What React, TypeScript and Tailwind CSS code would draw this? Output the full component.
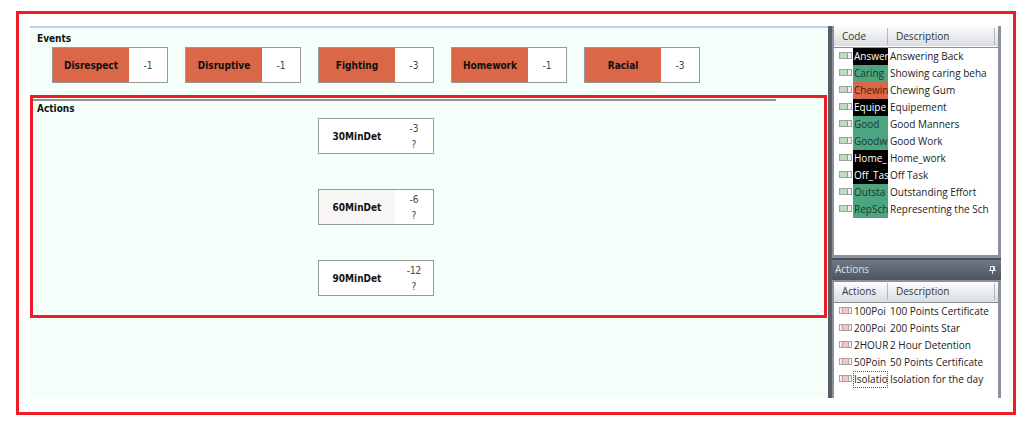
import { clsx } from 'clsx'

type Tone = 'black' | 'green' | 'orange'

const events = [
  { name: 'Disrespect', points: '-1' },
  { name: 'Disruptive', points: '-1' },
  { name: 'Fighting', points: '-3' },
  { name: 'Homework', points: '-1' },
  { name: 'Racial', points: '-3' },
]

const actions = [
  { name: '30MinDet', points: '-3', shaded: false },
  { name: '60MinDet', points: '-6', shaded: true },
  { name: '90MinDet', points: '-12', shaded: false },
]

const codes: { code: string; description: string; tone: Tone }[] = [
  { code: 'Answer', description: 'Answering Back', tone: 'black' },
  { code: 'Caring', description: 'Showing caring beha', tone: 'green' },
  { code: 'Chewin', description: 'Chewing Gum', tone: 'orange' },
  { code: 'Equipe', description: 'Equipement', tone: 'black' },
  { code: 'Good', description: 'Good Manners', tone: 'green' },
  { code: 'Goodw', description: 'Good Work', tone: 'green' },
  { code: 'Home_', description: 'Home_work', tone: 'black' },
  { code: 'Off_Tas', description: 'Off Task', tone: 'black' },
  { code: 'Outsta', description: 'Outstanding Effort', tone: 'green' },
  { code: 'RepSch', description: 'Representing the Sch', tone: 'green' },
]

const actionCodes = [
  { code: '100Poi', description: '100 Points Certificate' },
  { code: '200Poi', description: '200 Points Star' },
  { code: '2HOUR', description: '2 Hour Detention' },
  { code: '50Poin', description: '50 Points Certificate' },
  { code: 'Isolatio', description: 'Isolation for the day', focused: true },
]

const tones: Record<Tone, string> = {
  black: 'bg-black text-white',
  green: 'bg-[#4ca580] text-[#173a2c]',
  orange: 'bg-[#da6747] text-[#4a1c10]',
}

function EventIcon() {
  return (
    <svg width="13" height="7" viewBox="0 0 13 7" className="block" aria-hidden="true">
      <rect x="0.5" y="0.5" width="12" height="6" fill="#f0f0f0" stroke="#9aa39c" />
      <rect x="1" y="1" width="7" height="5" fill="#bfdcbf" />
      <path d="M8.5 1v5" stroke="#8f9891" />
    </svg>
  )
}

function ActionIcon() {
  return (
    <svg width="13" height="7" viewBox="0 0 13 7" className="block" aria-hidden="true">
      <rect x="0.5" y="0.5" width="12" height="6" fill="#f1f1f1" stroke="#a6a2a2" />
      <rect x="4" y="1" width="5" height="5" fill="#fbc4c4" />
      <path d="M3.5 1v5M9.5 1v5" stroke="#b8a6a6" />
    </svg>
  )
}

function PinIcon() {
  return (
    <svg width="7" height="8" viewBox="0 0 7 8" aria-hidden="true">
      <path d="M1.5 4.5v-4h4v4M0 4.5h7M3.5 5v3" fill="none" stroke="#e6e9ed" />
      <path d="M4.5 1v3" stroke="#e6e9ed" />
    </svg>
  )
}

function ListHead({ first }: { first: string }) {
  return (
    <thead>
      <tr className="h-[21px] bg-linear-to-b from-[#fdfdfd] to-[#d9dce0] text-[#333] border-b border-[#8b8f96]">
        <th colSpan={2} className="p-0 font-normal text-left">
          <div className="pl-2 border-r border-[#b4b8be]">{first}</div>
        </th>
        <th className="p-0 pr-[3px] font-normal text-left">
          <div className="pl-2 border-r border-[#b4b8be]">Description</div>
        </th>
      </tr>
    </thead>
  )
}

function ListCols() {
  return (
    <colgroup>
      <col className="w-[19px]" />
      <col className="w-[35px]" />
      <col />
    </colgroup>
  )
}

export default function App() {
  return (
    <div className="min-h-screen flex bg-white pt-[11px] pb-[15px] pl-4 pr-2">
      <div className="flex-1 flex min-w-0 border-3 border-[#ee1c25] pt-3 pb-[14px] pl-[11px] pr-3">
        <main className="flex-1 min-w-0 bg-[#f4fffa] border-t-2 border-[#b4d6ee] font-['DejaVu_Sans_Condensed','DejaVu_Sans',sans-serif] text-[10px] leading-[14px] text-[#111]">
          <section className="pt-1 pb-3">
            <h2 className="pl-[7px] font-bold">Events</h2>
            <div className="flex gap-[17px] pl-[22px] pt-px">
              {events.map((event) => (
                <div key={event.name} className="w-[116px] h-9 flex shrink-0 border border-[#999] bg-white">
                  <div className="w-[76px] pt-[2px] flex items-center justify-center bg-[#da6747] font-bold">
                    {event.name}
                  </div>
                  <div className="flex-1 pt-[2px] flex items-center justify-center text-[#444]">{event.points}</div>
                </div>
              ))}
            </div>
          </section>

          <section className="mr-px border-3 border-[#ee1c25] pt-px pb-[19px]">
            <hr className="mr-12 h-[2px] border-0 bg-[#8d9591]" />
            <h2 className="pl-1 pt-px font-bold">Actions</h2>
            <div className="flex flex-col gap-[35px] pl-[285px] pt-[2px]">
              {actions.map((action) => (
                <div key={action.name} className="w-[116px] h-9 flex border border-[#999] bg-white">
                  <div
                    className={clsx(
                      'w-[76px] pt-[2px] flex items-center justify-center font-bold',
                      action.shaded && 'bg-[#f8f7f6]'
                    )}
                  >
                    {action.name}
                  </div>
                  <div className="flex-1 pt-[2px] flex flex-col items-center justify-center leading-4 text-[#444]">
                    <span>{action.points}</span>
                    <span>?</span>
                  </div>
                </div>
              ))}
            </div>
          </section>
        </main>

        <aside className="w-[173px] shrink-0 flex flex-col border-l-4 border-[#5a5d63] bg-[#8a919b] font-['Open_Sans','Noto_Sans',sans-serif] text-[10px] leading-[17px] text-[#222]">
          <div className="ml-[2px] mr-[3px] mb-[3px] pb-[37px] bg-white">
            <table className="w-full table-fixed border-collapse whitespace-nowrap">
              <ListCols />
              <ListHead first="Code" />
              <tbody>
                {codes.map((row) => (
                  <tr key={row.code} className="h-[17px]">
                    <td className="p-0 pl-[5px] pt-1 align-top">
                      <EventIcon />
                    </td>
                    <td className={clsx('p-0 pl-px overflow-hidden', tones[row.tone])}>{row.code}</td>
                    <td className="p-0 pl-[2px] overflow-hidden">{row.description}</td>
                  </tr>
                ))}
              </tbody>
            </table>
          </div>

          <div className="h-[22px] flex items-center justify-between pl-[3px] pr-[5px] border-t-2 border-[#4a4e55] bg-linear-to-b from-[#707883] to-[#4e5560] text-[#dfe2e6]">
            <h2>Actions</h2>
            <button type="button" aria-label="Pin panel">
              <PinIcon />
            </button>
          </div>

          <div className="flex-1 ml-[2px] mr-[3px] mt-[2px] bg-white">
            <table className="w-full table-fixed border-collapse whitespace-nowrap">
              <ListCols />
              <ListHead first="Actions" />
              <tbody>
                {actionCodes.map((row) => (
                  <tr key={row.code} className="h-[17px]">
                    <td className="p-0 pl-[5px] pt-1 align-top">
                      <ActionIcon />
                    </td>
                    <td
                      className={clsx(
                        'p-0 pl-px overflow-hidden',
                        row.focused && 'outline-1 -outline-offset-1 outline-dotted outline-[#555]'
                      )}
                    >
                      {row.code}
                    </td>
                    <td className="p-0 pl-[2px] overflow-hidden">{row.description}</td>
                  </tr>
                ))}
              </tbody>
            </table>
          </div>
        </aside>
      </div>
    </div>
  )
}
